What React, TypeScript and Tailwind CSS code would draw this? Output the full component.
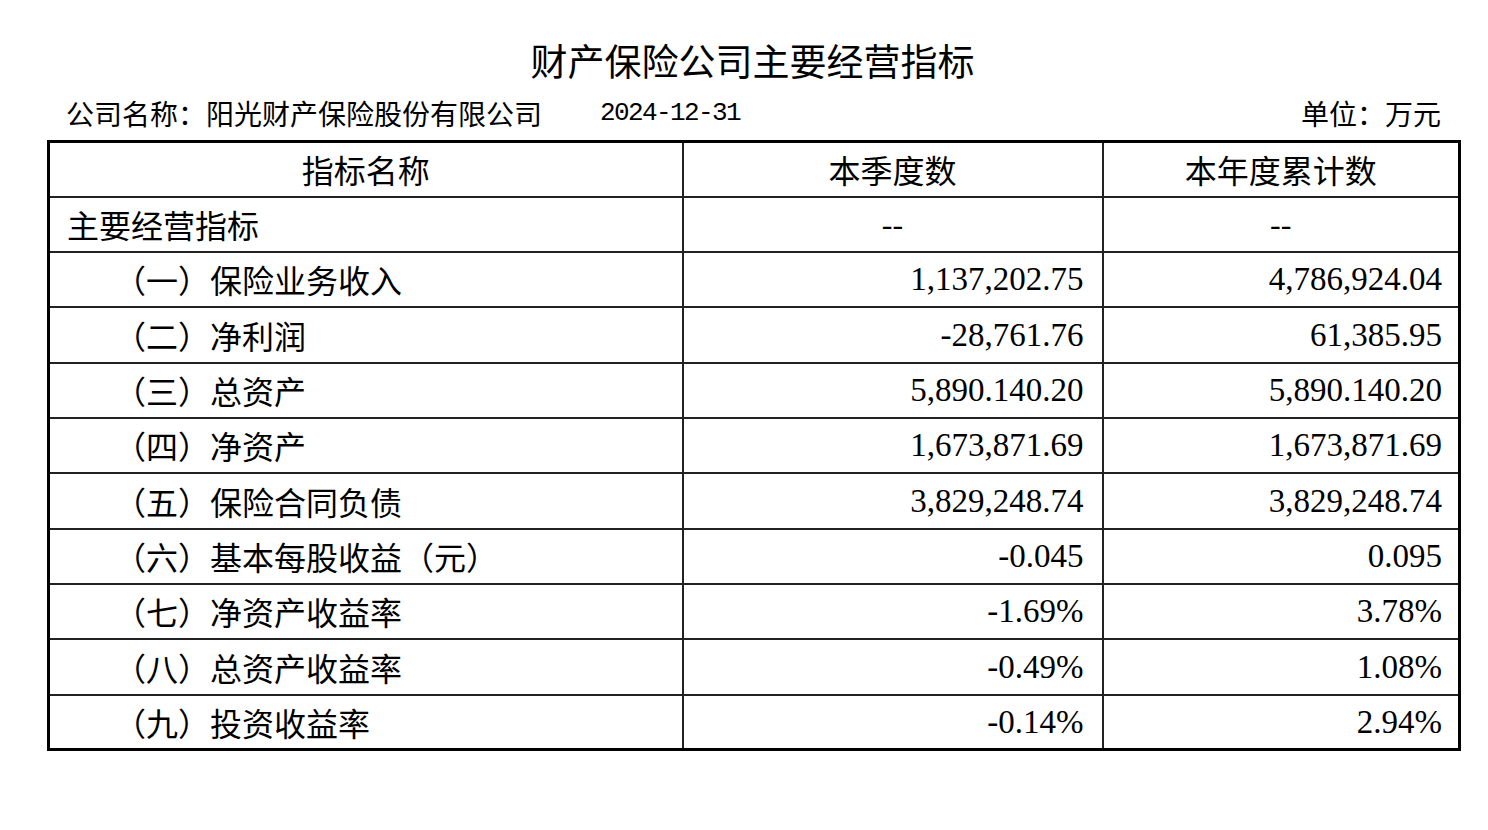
import React from "react";

const rows: [string, string, string, string][] = [
  ["（一）保险业务收入", "1,137,202.75", "4,786,924.04", "h-[55px]"],
  ["（二）净利润", "-28,761.76", "61,385.95", "h-[56px]"],
  ["（三）总资产", "5,890.140.20", "5,890.140.20", "h-[55px]"],
  ["（四）净资产", "1,673,871.69", "1,673,871.69", "h-[55px]"],
  ["（五）保险合同负债", "3,829,248.74", "3,829,248.74", "h-[56px]"],
  ["（六）基本每股收益（元）", "-0.045", "0.095", "h-[55px]"],
  ["（七）净资产收益率", "-1.69%", "3.78%", "h-[55px]"],
  ["（八）总资产收益率", "-0.49%", "1.08%", "h-[56px]"],
  ["（九）投资收益率", "-0.14%", "2.94%", "h-[55px]"],
];

const cjk = "font-['Noto_Sans_CJK_SC',sans-serif]";
const num = "font-['Liberation_Serif','Noto_Sans_CJK_SC',serif]";

export default function App() {
  return (
    <div className="w-[1488px] h-[830px] bg-white text-black overflow-hidden">
      <div className="ml-[47px] w-[1411px]">
        <div className={`${cjk} h-[90px] pt-[35px] text-center text-[37px] leading-[50px]`}>
          财产保险公司主要经营指标
        </div>
        <div className="flex items-center h-[50px] pl-[19px] pr-[17px] pb-[4px]">
          <span className={`${cjk} text-[28px] leading-[40px]`}>公司名称：阳光财产保险股份有限公司</span>
          <span className="ml-[58px] font-['Liberation_Mono',monospace] text-[26px] tracking-[-1.6px] leading-[40px]">
            2024-12-31
          </span>
          <span className={`${cjk} ml-auto text-[28px] leading-[40px]`}>单位：万元</span>
        </div>
        <table className="w-[1411px] table-fixed border-collapse border-[3px] border-black">
          <colgroup>
            <col className="w-[634px]" />
            <col className="w-[420px]" />
            <col className="w-[357px]" />
          </colgroup>
          <tbody>
            <tr className="h-[55px]">
              <td className={`${cjk} border-2 border-[#222] text-center text-[32px] leading-[40px] p-0`}>指标名称</td>
              <td className={`${cjk} border-2 border-[#222] text-center text-[32px] leading-[40px] p-0`}>本季度数</td>
              <td className={`${cjk} border-2 border-[#222] text-center text-[32px] leading-[40px] p-0`}>本年度累计数</td>
            </tr>
            <tr className="h-[55px]">
              <td className={`${cjk} border-2 border-[#222] text-left pl-[17px] text-[32px] leading-[40px]`}>主要经营指标</td>
              <td className={`${num} border-2 border-[#222] text-center text-[32px] leading-[40px] p-0`}>--</td>
              <td className={`${num} border-2 border-[#222] text-center text-[32px] leading-[40px] p-0`}>--</td>
            </tr>
            {rows.map(([name, q, y, h]) => (
              <tr key={name} className={h}>
                <td className={`${cjk} border-2 border-[#222] text-left pl-[64px] text-[32px] leading-[40px] whitespace-nowrap`}>{name}</td>
                <td className={`${num} border-2 border-[#222] text-right pr-[18px] text-[33px] leading-[40px]`}>{q}</td>
                <td className={`${num} border-2 border-[#222] text-right pr-[16px] text-[33px] leading-[40px]`}>{y}</td>
              </tr>
            ))}
          </tbody>
        </table>
      </div>
    </div>
  );
}
